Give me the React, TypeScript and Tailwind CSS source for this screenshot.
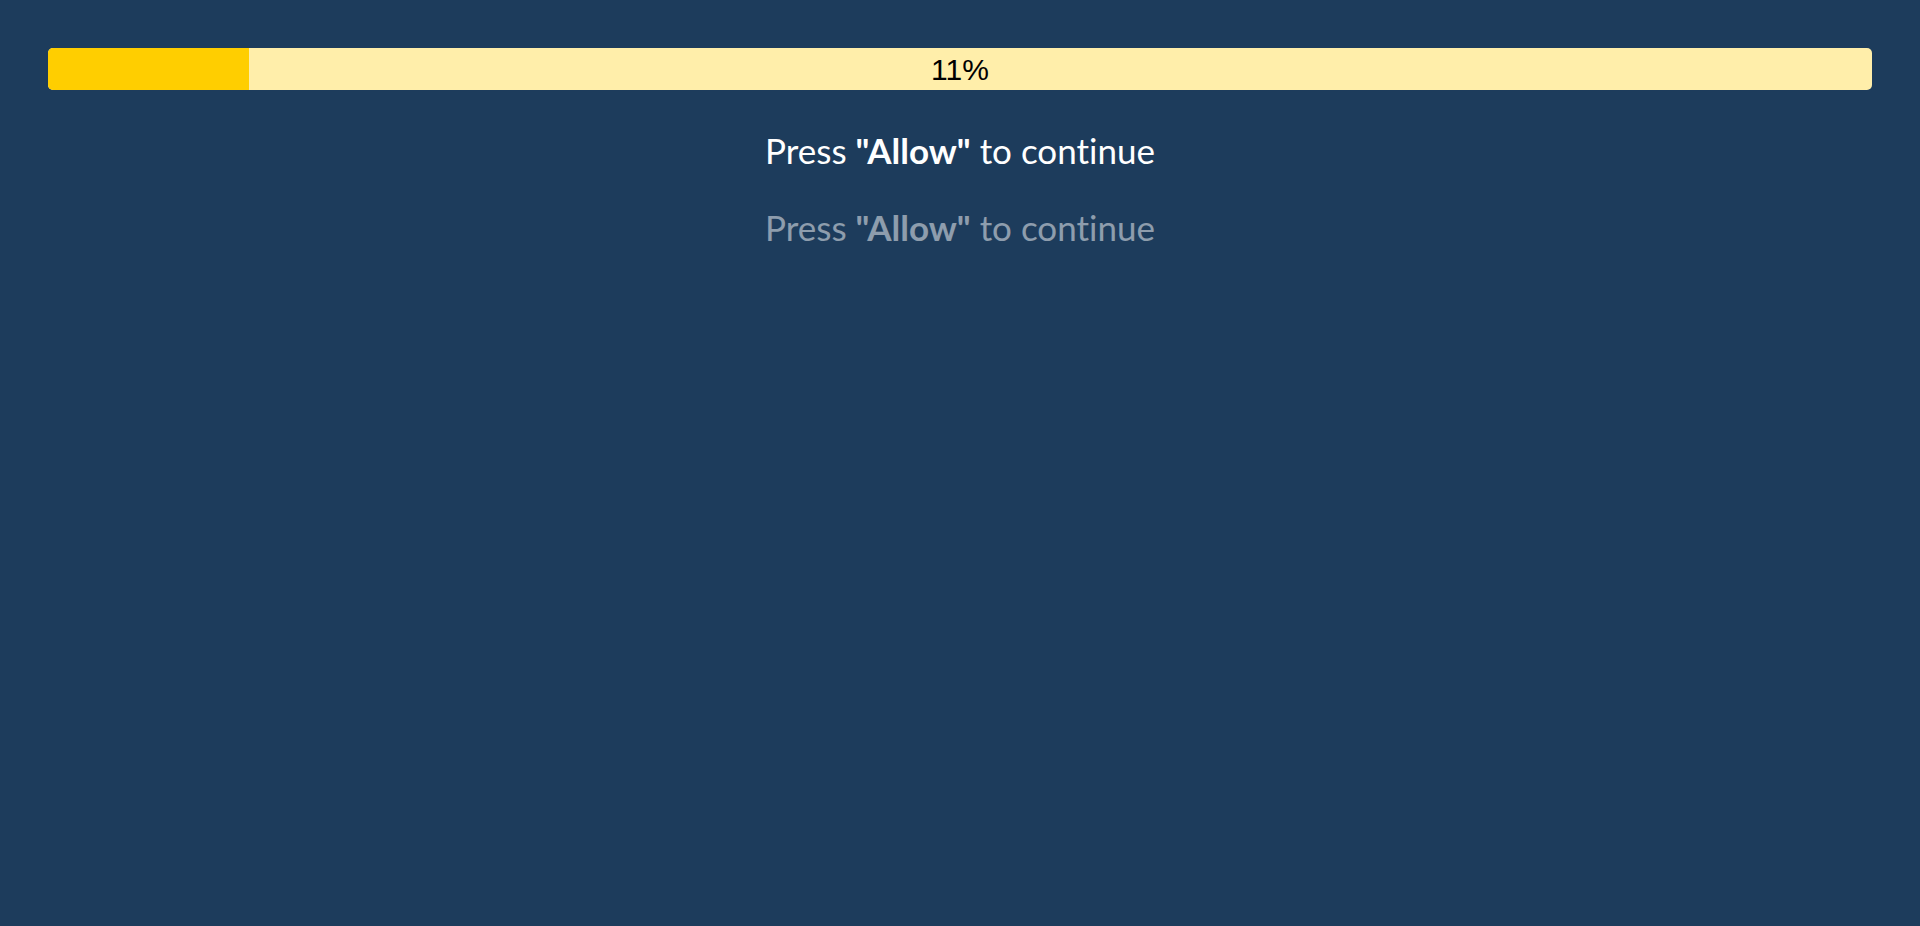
export default function App() {
  const progress = 11;

  return (
    <div className="min-h-screen w-full bg-[#1d3c5c] px-12 pt-12">
      {/* progress bar */}
      <div className="relative h-[42px] w-full overflow-hidden rounded-[5px] bg-[#ffeeaa]">
        <div className="h-full bg-[#ffce00]" style={{ width: `${progress}%` }} />
        <div className="absolute inset-0 flex items-center justify-center font-['Liberation_Sans',Arial,sans-serif] text-[30px] text-black">
          {progress}%
        </div>
      </div>

      <div className="mt-[40px] flex flex-col items-center gap-[37px] font-['Lato','Open_Sans',sans-serif] text-[35px] leading-[40px] [font-variant-ligatures:none]">
        <p className="text-white">
          Press <b>"Allow"</b> to continue
        </p>
        <p className="text-white/50">
          Press <b>"Allow"</b> to continue
        </p>
      </div>
    </div>
  );
}
